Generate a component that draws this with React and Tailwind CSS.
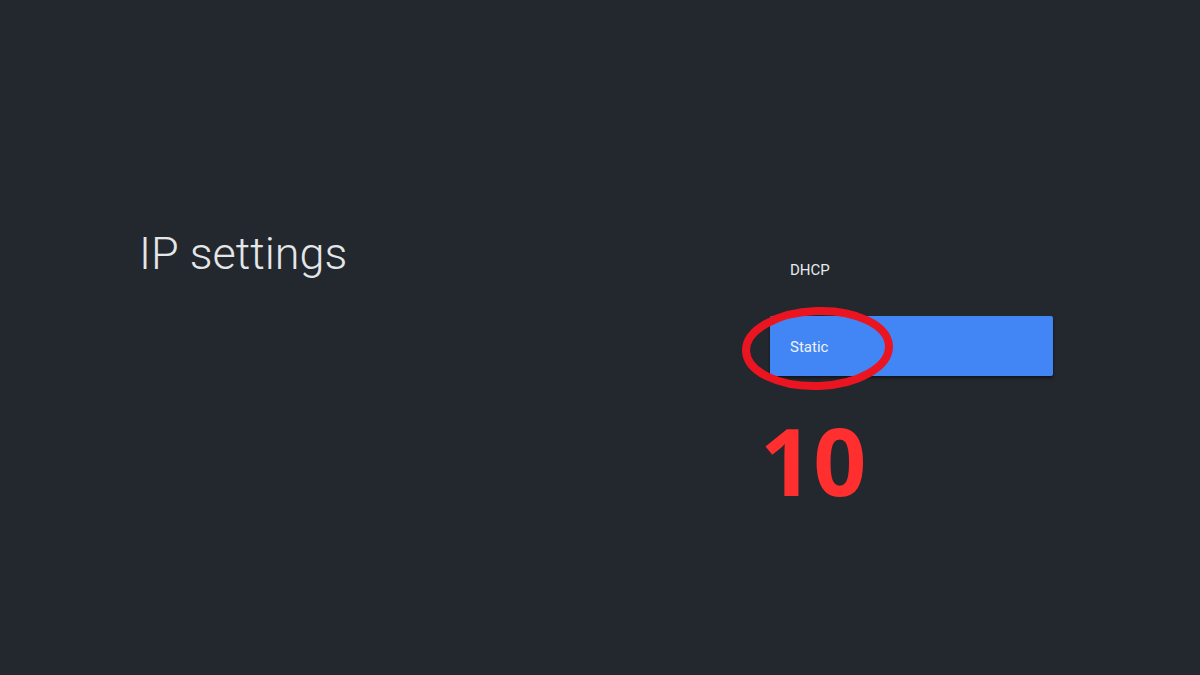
export default function App() {
  return (
    <div className="w-[1200px] h-[675px] bg-[#22282e] flex overflow-hidden" style={{ fontFamily: "Roboto, 'Liberation Sans', sans-serif" }}>
      <div className="w-[770px] pl-[139px] pt-[226px]">
        <h1 className="text-[45px] font-light text-[#e4e6e8] leading-[56px]">IP settings</h1>
      </div>
      <div className="flex flex-col pt-[256px]">
        <div className="h-[28px] pl-[20px] flex items-center text-[15px] text-[#e8eaec]">DHCP</div>
        <div className="relative mt-[32px] w-[283px] h-[60px] bg-[#4285f4] rounded-[2px] shadow-[0_2px_3px_rgba(0,0,0,0.5)] pl-[20px] pt-[2px] flex items-center text-[15px] text-[#eef3fb]">
          Static
          <svg className="absolute left-[-30px] top-[-10px]" width="160" height="92" viewBox="0 0 160 92">
            <ellipse cx="77.5" cy="42.5" rx="71.5" ry="37.5" fill="none" stroke="#ea1520" strokeWidth="8" transform="rotate(-2 77.5 42.5)" />
          </svg>
        </div>
        <div className="mt-[38px] ml-[-10px] text-[93px] font-bold text-[#ff2f2f] leading-[92px]" style={{ fontFamily: "'Open Sans', sans-serif" }}>10</div>
      </div>
    </div>
  );
}
